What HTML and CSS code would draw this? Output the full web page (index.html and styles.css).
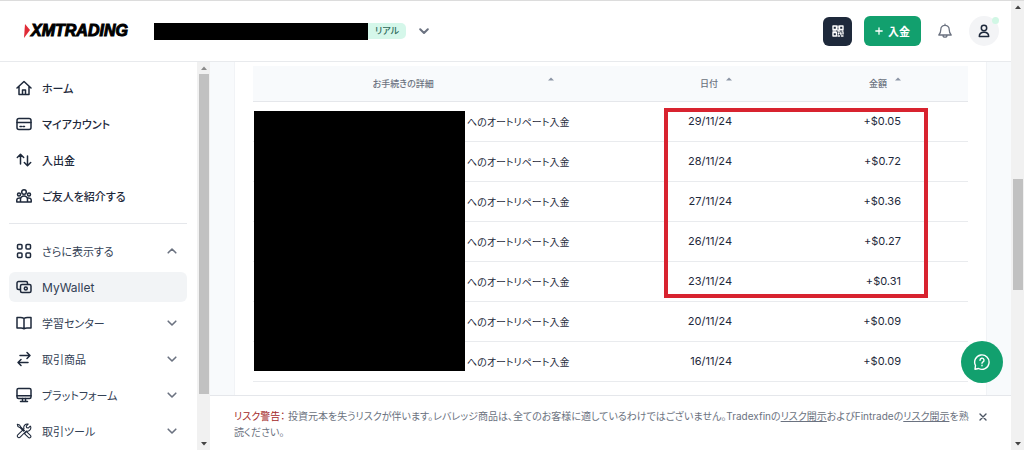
FILE: index.html
```html
<!DOCTYPE html>
<html lang="ja">
<head>
  <meta charset="UTF-8">
  <title>MyWallet - XMTRADING</title>
  <link rel="stylesheet" href="styles.css">
</head>
<body>
  <svg class="sprite" aria-hidden="true">
    <symbol id="chevron" viewBox="0 0 10 10"><path d="M1.2 3.2 5 7l3.800-3.800"/></symbol>
    <symbol id="sort" viewBox="0 0 6 4"><path d="M0 3.500 3 .5l3 3z"/></symbol>
    <symbol id="tri-up" viewBox="0 0 6 4"><path d="M0 4 3 .5 6 4z"/></symbol>
    <symbol id="tri-down" viewBox="0 0 6 4"><path d="M0 0 3 3.500 6 0z"/></symbol>
  </svg>

  <div class="page">
    <div class="app">
      <header class="header">
        <a class="logo" href="#">
          <svg class="logo-mark" viewBox="0 0 6 14"><path d="M1 0 6 6 0 14z"/></svg>
          <span>XMTRADING</span>
        </a>
        <div class="account">
          <span class="account-id"></span>
          <span class="badge">リアル</span>
          <button class="icon-btn account-toggle" aria-label="口座を選択"><svg class="chevron"><use href="#chevron"/></svg></button>
        </div>
        <div class="actions">
          <button class="qr-btn" aria-label="QR">
            <svg viewBox="0 0 12 12">
              <path class="line" d="M1 1h3.500v3.500H1zM7.500 1H11v3.500H7.500zM1 7.500h3.500V11H1z"/>
              <path class="line" d="M6 1v1.500M6 4v2h2M1 6h3M10 6h1M6.500 8v1M8 8h1v1.500M11 7.500V9M6 11h1.500M9.500 11H11"/>
            </svg>
          </button>
          <button class="deposit-btn"><svg viewBox="0 0 10 10"><path d="M5 1v8M1 5h8"/></svg>入金</button>
          <button class="icon-btn bell" aria-label="お知らせ">
            <svg viewBox="0 0 16 16"><path d="M8 1.200v1M3.800 6.500a4.200 4.200 0 0 1 8.400 0c0 3.500.8 4.300 2 5.500H1.800c1.200-1.200 2-2 2-5.500zM6 12.200a2 2 0 0 0 4 0"/></svg>
          </button>
          <button class="avatar" aria-label="プロフィール">
            <svg viewBox="0 0 14 14"><circle cx="7" cy="4" r="2.700"/><path d="M2.300 12.600c0-3 1.600-4.300 4.700-4.300s4.700 1.300 4.700 4.300z"/></svg>
            <span class="dot"></span>
          </button>
        </div>
      </header>

      <div class="body">
        <nav class="sidebar">
          <div class="menu">
            <a class="item strong" href="#">
              <svg viewBox="0 0 16 16"><path d="M1 8 8 1.500 15 8M3 6.500v8h10v-8M6.500 14.500V10h3v4.500"/></svg>ホーム</a>
            <a class="item strong" href="#">
              <svg viewBox="0 0 16 16"><rect x="1" y="2.500" width="14" height="11" rx="2"/><path d="M1 6.500h14M4 10.500h1.500M7 10.500h1.500"/></svg>マイアカウント</a>
            <a class="item strong" href="#">
              <svg viewBox="0 0 16 16"><path d="M4.500 12V2.500M1.300 5.500l3.200-3.200 3.200 3.200M11.500 4v9.500M8.300 10.500l3.200 3.200 3.200-3.200"/></svg>入出金</a>
            <a class="item strong" href="#">
              <svg viewBox="0 0 16 16"><circle cx="8" cy="4" r="2.300"/><circle cx="3" cy="6.500" r="1.500"/><circle cx="13" cy="6.500" r="1.500"/><path d="M4.500 14v-2.500a3.500 3.500 0 0 1 7 0V14zM4.500 14H.8v-2c0-1.500 1.300-2.200 3.600-2M11.500 14h3.700v-2c0-1.500-1.300-2.200-3.600-2"/></svg>ご友人を紹介する</a>
            <hr class="divider">
            <a class="item" href="#">
              <svg viewBox="0 0 16 16"><rect x="1.500" y="1.500" width="4.500" height="4.500" rx="1"/><rect x="10" y="1.500" width="4.500" height="4.500" rx="1"/><rect x="1.500" y="10" width="4.500" height="4.500" rx="1"/><rect x="10" y="10" width="4.500" height="4.500" rx="1"/></svg>さらに表示する<svg class="chevron up"><use href="#chevron"/></svg></a>
            <a class="item active" href="#">
              <svg viewBox="0 0 16 16"><rect x="4.500" y="5.500" width="10.500" height="8" rx="1.500"/><circle cx="9.800" cy="9.500" r="1.500"/><path d="M4 10.500H2.500A1.500 1.500 0 0 1 1 9V4a1.500 1.500 0 0 1 1.500-1.500H10A1.500 1.500 0 0 1 11.500 4v1"/></svg>MyWallet</a>
            <a class="item" href="#">
              <svg viewBox="0 0 16 16"><path d="M8 3.500v10M8 3.500C7 2.800 6 2.500 4.500 2.500H1v10.500h4c1.300 0 2 .2 3 .8 1-.6 1.700-.8 3-.8h4V2.500h-3.500C10 2.500 9 2.800 8 3.500z"/></svg>学習センター<svg class="chevron"><use href="#chevron"/></svg></a>
            <a class="item" href="#">
              <svg viewBox="0 0 16 16"><path d="M4 4.500h10M11 1.500l3 3-3 3M12 11.500H2M5 8.500l-3 3 3 3"/></svg>取引商品<svg class="chevron"><use href="#chevron"/></svg></a>
            <a class="item" href="#">
              <svg viewBox="0 0 16 16"><rect x="1" y="1.500" width="14" height="10" rx="1.500"/><path d="M1 8.800h14M6.500 11.500v2.500M9.500 11.500v2.500M4.500 14.500h7"/></svg>プラットフォーム<svg class="chevron"><use href="#chevron"/></svg></a>
            <a class="item" href="#">
              <svg class="tools" viewBox="0 0 18 18"><path d="M1.500 1.500 4 2.200l1.500 2.500 4 4M1.500 1.500 2.200 4l2.600 1.500 3.700 3.700M10.500 11l1-1.500 4.700 4.500a1.600 1.600 0 0 1-2.300 2.300L9.500 12zM16 3.500l-2.200 2.200-1.800-.5-.5-1.800L13.700 1.200a4 4 0 0 0-4.700 5.300L2 13.300a1.900 1.900 0 0 0 2.700 2.700l6.800-7a4 4 0 0 0 5-5z"/></svg>取引ツール<svg class="chevron"><use href="#chevron"/></svg></a>
          </div>
          <div class="scrollbar">
            <svg><use href="#tri-up"/></svg>
            <div class="track"><div class="thumb side-thumb"></div></div>
            <svg class="dark"><use href="#tri-down"/></svg>
          </div>
        </nav>

        <main class="main">
          <div class="content">
            <div class="card">
              <div class="table-wrap">
                <table class="history">
                  <thead>
                    <tr>
                      <th class="detail"><div class="th-inner">お手続きの詳細<svg class="sort"><use href="#sort"/></svg></div></th>
                      <th class="date"><div class="th-inner">日付<svg class="sort"><use href="#sort"/></svg></div></th>
                      <th class="amount"><div class="th-inner">金額<svg class="sort"><use href="#sort"/></svg></div></th>
                    </tr>
                  </thead>
                  <tbody>
                    <tr><td class="detail">へのオートリペート入金</td><td class="date">29/11/24</td><td class="amount">+$0.05</td></tr>
                    <tr><td class="detail">へのオートリペート入金</td><td class="date">28/11/24</td><td class="amount">+$0.72</td></tr>
                    <tr><td class="detail">へのオートリペート入金</td><td class="date">27/11/24</td><td class="amount">+$0.36</td></tr>
                    <tr><td class="detail">へのオートリペート入金</td><td class="date">26/11/24</td><td class="amount">+$0.27</td></tr>
                    <tr><td class="detail">へのオートリペート入金</td><td class="date">23/11/24</td><td class="amount">+$0.31</td></tr>
                    <tr><td class="detail">へのオートリペート入金</td><td class="date">20/11/24</td><td class="amount">+$0.09</td></tr>
                    <tr><td class="detail">へのオートリペート入金</td><td class="date">16/11/24</td><td class="amount">+$0.09</td></tr>
                  </tbody>
                </table>
                <div class="mask"></div>
                <div class="highlight"></div>
              </div>
            </div>
            <button class="chat" aria-label="ヘルプ">
              <svg viewBox="0 0 18 18"><path d="M2.500 12.500A7.200 7.200 0 1 1 5.500 15.500L2 16.200z"/><path d="M7 7.200a2 2 0 1 1 3 1.700c-.7.400-1 .8-1 1.400M9 12.200v.6"/></svg>
            </button>
          </div>
          <div class="risk">
            <p><span class="risk-label">リスク警告：</span> 投資元本を失うリスクが伴います。レバレッジ商品は、全てのお客様に適しているわけではございません。Tradexfinの<a href="#">リスク開示</a>およびFintradeの<a href="#">リスク開示</a>を熟読ください。</p>
            <button class="icon-btn close" aria-label="閉じる"><svg viewBox="0 0 8 8"><path d="M1 1l6 6M7 1 1 7"/></svg></button>
          </div>
        </main>
      </div>
    </div>

    <div class="scrollbar page-scrollbar">
      <svg class="dark"><use href="#tri-up"/></svg>
      <div class="track"><div class="thumb page-thumb"></div></div>
      <svg class="dark"><use href="#tri-down"/></svg>
    </div>
  </div>
</body>
</html>
```
FILE: styles.css
```css
* {
  box-sizing: border-box;
}
body {
  margin: 0;
  font-family: Inter, "Noto Sans CJK JP", sans-serif;
  font-feature-settings: "palt";
  font-size: 12px;
  color: #1e293b;
  background: #fff;
}
button {
  font: inherit;
  border: none;
  padding: 0;
  cursor: pointer;
}
svg {
  fill: none;
  stroke: currentColor;
  stroke-linecap: round;
  stroke-linejoin: round;
  flex-shrink: 0;
}
.sprite {
  display: none;
}
.page {
  display: flex;
  height: 100vh;
  border-top: 1px solid #dcdcdc;
}
.app {
  flex: 1;
  min-width: 0;
  display: flex;
  flex-direction: column;
}
.icon-btn {
  background: none;
  display: flex;
}
.chevron {
  width: 10px;
  height: 10px;
  color: #6b7280;
  stroke-width: 2;
}
.chevron.up {
  transform: rotate(180deg);
}

/* header */
.header {
  display: flex;
  align-items: center;
  height: 61px;
  padding: 0 12px 0 24px;
  border-bottom: 1px solid #e8eaed;
}
.logo {
  display: flex;
  align-items: center;
  gap: 1px;
  width: 130px;
  color: #000;
  font: italic bold 16px/16px "Liberation Sans", sans-serif;
  text-decoration: none;
  -webkit-text-stroke: 1px #000;
}
.logo-mark {
  width: 6px;
  height: 14px;
  fill: #e02b36;
  stroke: none;
}
.account {
  display: flex;
  align-items: center;
}
.account-id {
  width: 214px;
  height: 17px;
  background: #000;
}
.badge {
  height: 16px;
  padding: 0 7px;
  border-radius: 0 5px 5px 0;
  background: #d5f7ea;
  color: #2f6b5b;
  font-size: 9px;
  font-weight: 500;
  line-height: 15px;
}
.account-toggle {
  margin-left: 13px;
}
.actions {
  display: flex;
  align-items: center;
  margin-left: auto;
}
.qr-btn {
  display: flex;
  align-items: center;
  justify-content: center;
  width: 29px;
  height: 29px;
  border-radius: 6px;
  background: #1e293b;
  color: #fff;
}
.qr-btn svg {
  width: 12px;
  height: 12px;
  stroke-width: 1.4;
}
.deposit-btn {
  display: flex;
  align-items: center;
  justify-content: center;
  gap: 5px;
  width: 57px;
  height: 30px;
  margin-left: 12px;
  border-radius: 6px;
  background: #12a06e;
  color: #fff;
  font-size: 11px;
  font-weight: 700;
}
.deposit-btn svg {
  width: 8px;
  height: 8px;
  stroke-width: 1.6;
}
.bell {
  margin: 0 16px;
  color: #6b7280;
}
.bell svg {
  width: 16px;
  height: 16px;
  stroke-width: 1.3;
}
.avatar {
  position: relative;
  display: flex;
  align-items: center;
  justify-content: center;
  width: 30px;
  height: 30px;
  border-radius: 50%;
  background: #f3f4f6;
  color: #1e293b;
}
.avatar svg {
  width: 14px;
  height: 14px;
  stroke-width: 1.5;
}
.dot {
  position: absolute;
  top: 1px;
  right: 0;
  width: 7px;
  height: 7px;
  border-radius: 50%;
  background: #d1f7e5;
}

/* sidebar */
.body {
  flex: 1;
  min-height: 0;
  display: flex;
}
.sidebar {
  display: flex;
  width: 210px;
  overflow: hidden;
}
.menu {
  flex: 1;
  display: flex;
  flex-direction: column;
  gap: 6px;
  padding: 11px 10px 0 9px;
}
.item {
  display: flex;
  align-items: center;
  flex-shrink: 0;
  gap: 10px;
  height: 30px;
  padding: 0 10px 0 7px;
  border-radius: 6px;
  color: #334155;
  font-size: 11px;
  text-decoration: none;
}
.item svg {
  width: 16px;
  height: 16px;
  color: #1e293b;
  stroke-width: 1.5;
}
.item .tools {
  stroke-width: 1.2;
}
.item .chevron {
  width: 10px;
  height: 10px;
  margin-left: auto;
  color: #6b7280;
  stroke-width: 1.6;
}
.strong {
  color: #1e293b;
  font-weight: 500;
}
.active {
  background: #f2f4f6;
  font-size: 12px;
}
.divider {
  width: 100%;
  margin: 6px 0;
  border: none;
  border-top: 1px solid #e5e7eb;
}

/* scrollbars */
.scrollbar {
  display: flex;
  flex-direction: column;
  align-items: center;
  width: 13px;
  padding: 4px 0;
  background: #f1f1f1;
}
.scrollbar svg {
  width: 6px;
  height: 4px;
  fill: #8a8a8a;
  stroke: none;
}
.scrollbar .dark {
  fill: #444;
}
.track {
  flex: 1;
  width: 10px;
  padding: 4px 0;
}
.thumb {
  background: #c1c1c1;
}
.side-thumb {
  height: 88%;
}
.page-thumb {
  height: 26%;
  margin-top: 166px;
}

/* content */
.main {
  flex: 1;
  min-width: 0;
  display: flex;
  flex-direction: column;
}
.content {
  position: relative;
  flex: 1;
  min-height: 0;
  overflow: hidden;
  padding: 0 24px;
  background: #f8fafc;
}
.card {
  height: 100%;
  padding: 4px 18px;
  border: solid #f1f3f6;
  border-width: 0 1px;
  background: #fff;
}
.table-wrap {
  position: relative;
}
.history {
  width: 100%;
  table-layout: fixed;
  border-collapse: collapse;
  font-size: 11px;
}
.history th {
  height: 35px;
  padding: 0;
  background: #f8fafc;
  border-bottom: 1px solid #e5e7eb;
  color: #6b7280;
  font-size: 9px;
  font-weight: 500;
}
.history td {
  height: 40px;
  padding: 0;
  border-bottom: 1px solid #e9ebee;
}
.th-inner {
  display: flex;
  justify-content: flex-end;
  gap: 8px;
}
.sort {
  width: 6px;
  height: 4px;
  fill: #8b95a5;
  stroke: none;
}
.history .detail {
  width: 43%;
}
th.detail .th-inner {
  justify-content: center;
  padding-right: 7px;
}
th.detail .sort {
  margin-left: 106px;
  margin-right: -120px;
}
.history td.detail {
  padding-left: 214px;
  font-size: 10px;
  text-align: left;
  white-space: nowrap;
}
.history .date {
  width: 24%;
  text-align: right;
}
.history .amount {
  padding-right: 67px;
  text-align: right;
}
.mask {
  position: absolute;
  top: 45px;
  left: 1px;
  width: 211px;
  height: 260px;
  background: #000;
}
.highlight {
  position: absolute;
  top: 42px;
  right: 40px;
  width: 264px;
  height: 190px;
  border: 4px solid #d8232f;
}
.chat {
  position: absolute;
  right: 8px;
  bottom: 12px;
  display: flex;
  align-items: center;
  justify-content: center;
  width: 42px;
  height: 42px;
  border-radius: 50%;
  background: #12a06e;
  color: #fff;
}
.chat svg {
  width: 18px;
  height: 18px;
  stroke-width: 1.4;
}

/* risk warning */
.risk {
  display: flex;
  align-items: flex-start;
  gap: 4px;
  height: 55px;
  padding: 12px 24px 0;
  border-top: 1px solid #e5e7eb;
  color: #6b7280;
  font-size: 10px;
  line-height: 16px;
}
.risk p {
  flex: 1;
  margin: 0;
}
.risk a {
  color: inherit;
}
.risk-label {
  color: #a32a2a;
}
.close {
  padding-top: 5px;
  color: #4b5563;
}
.close svg {
  width: 8px;
  height: 8px;
  stroke-width: 1.4;
}
```
